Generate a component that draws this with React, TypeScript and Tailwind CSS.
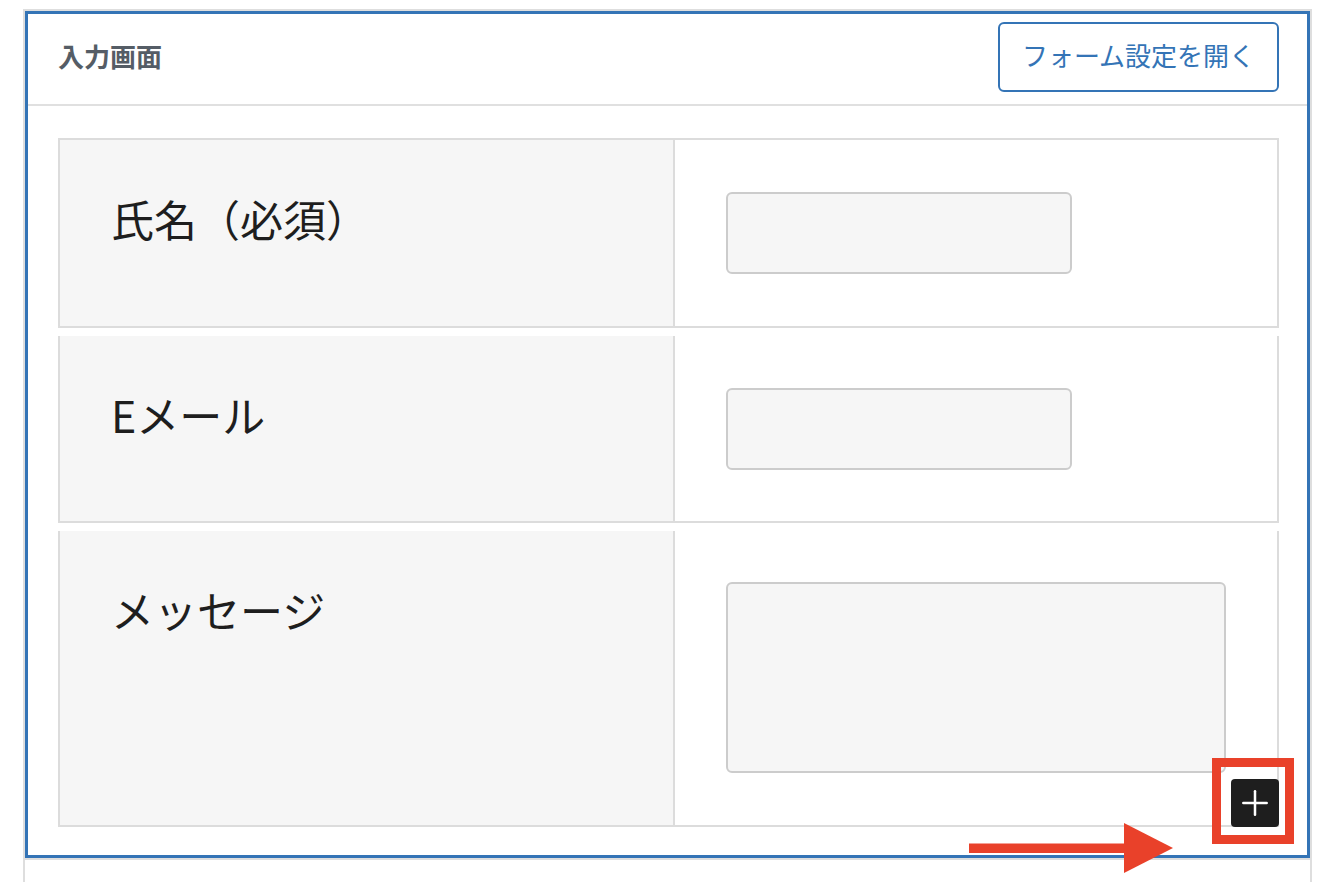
import { Plus } from 'lucide-react'

const font = { fontFamily: '"Noto Sans CJK JP", "Noto Sans", sans-serif' }

interface Row {
  label: string
  kind: 'input' | 'textarea'
}

const rows: Row[] = [
  { label: '氏名（必須）', kind: 'input' },
  { label: 'Eメール', kind: 'input' },
  { label: 'メッセージ', kind: 'textarea' },
]

function FormRow({ row, first }: Readonly<{ row: Row; first: boolean }>) {
  const last = row.kind === 'textarea'
  return (
    <div
      className={`grid grid-cols-[615px_1fr] border-x-2 border-b-2 border-[#dcdcdc] ${first ? 'border-t-2' : ''}`}
    >
      <div className="bg-[#f6f6f6] border-r-2 border-[#dcdcdc] pl-[51px] pt-[46px]">
        <span className="text-[43px] leading-normal text-[#1e1e1e]">{row.label}</span>
      </div>
      <div className={`bg-white pl-[51px] ${last ? 'pt-[51px] pb-[52px]' : first ? 'py-[52px]' : 'pt-[52px] pb-[51px]'}`}>
        {row.kind === 'input' ? (
          <input
            readOnly
            className="block w-[346px] h-[82px] rounded-[6px] border-2 border-[#cccccc] bg-[#f6f6f6] outline-none"
          />
        ) : (
          <textarea
            readOnly
            className="block w-[500px] h-[191px] rounded-[6px] border-2 border-[#cccccc] bg-[#f6f6f6] outline-none resize-none"
          />
        )}
      </div>
    </div>
  )
}

export default function App() {
  return (
    <div className="relative w-[1332px] h-[882px] overflow-hidden bg-white" style={font}>
      <div className="pt-[9px] pl-[23px]">
        {/* editor block frame */}
        <div className="w-[1289px] border-2 border-b-0 border-[#dedede]">
          <div className="border-[3px] border-[#3474b6] bg-white">
            {/* header */}
            <div className="h-[92px] flex items-start justify-between pl-[30px] pr-[28px] pt-[8px] border-b-2 border-[#e0e0e0]">
              <h2 className="mt-[21px] text-[26px] leading-none font-bold text-[#555d66]">入力画面</h2>
              <button
                type="button"
                className="w-[281px] h-[70px] rounded-[6px] border-2 border-[#3474b6] text-[26px] leading-none pb-[5px] text-[#3474b6] bg-white"
              >
                フォーム設定を開く
              </button>
            </div>

            {/* form table */}
            <div className="pt-[32px] pb-[28px] pl-[30px] pr-[28px]">
              <div className="relative flex flex-col gap-[8px]">
                {rows.map((r, i) => (
                  <FormRow key={r.label} row={r} first={i === 0} />
                ))}
                <button
                  type="button"
                  aria-label="ブロックを追加"
                  className="absolute right-0 bottom-0 w-[48px] h-[48px] rounded-[4px] bg-[#1e1e1e] flex items-center justify-center text-white"
                >
                  <Plus size={40} strokeWidth={1.5} />
                </button>
              </div>
            </div>
          </div>
          <div className="h-[30px] border-t-2 border-[#dedede]" />
        </div>
      </div>

      {/* annotation: highlight box */}
      <div className="absolute left-[1212px] top-[758px] w-[82px] h-[86px] border-[9px] border-[#e9412a]" />

      {/* annotation: arrow */}
      <svg className="absolute left-[965px] top-[820px]" width="212" height="56" viewBox="0 0 212 56">
        <rect x="4" y="23.5" width="157" height="9.5" fill="#e9412a" />
        <polygon points="159,3 208,28 159,53" fill="#e9412a" />
      </svg>
    </div>
  )
}
